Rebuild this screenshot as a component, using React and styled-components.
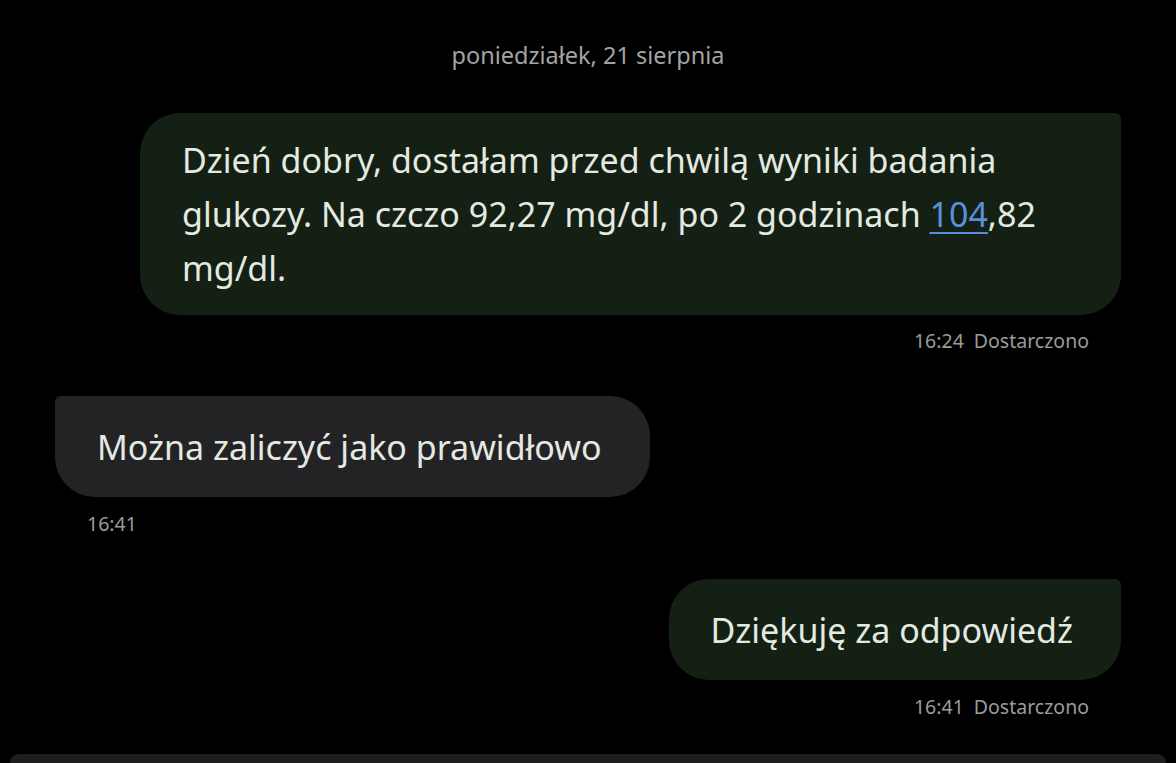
import React from 'react';
import styled, { createGlobalStyle } from 'styled-components';

const GlobalStyle = createGlobalStyle`
  html, body {
    margin: 0;
    padding: 0;
    background: #000;
    overflow: hidden;
  }
  body {
    font-family: "Noto Sans", "Liberation Sans", sans-serif;
  }
`;

const Screen = styled.div`
  width: 1176px;
  height: 763px;
  background: #000;
  overflow: hidden;
  display: flex;
  flex-direction: column;
`;

const MessageList = styled.div`
  display: flex;
  flex-direction: column;
  padding: 0 55px;
`;

const DateLabel = styled.div`
  margin-top: 40px;
  text-align: center;
  font-size: 23.5px;
  line-height: 30px;
  color: #a3a3a3;
`;

const Group = styled.div`
  display: flex;
  flex-direction: column;
  align-items: ${(p) => (p.$out ? 'flex-end' : 'flex-start')};
  margin-top: 43px;
`;

const Bubble = styled.div`
  box-sizing: border-box;
  max-width: 981px;
  padding: ${(p) => (p.$single ? '23.5px 48px 23.5px 42px' : '20px 42px')};
  font-size: 34px;
  line-height: 54px;
  color: #e4e9e2;
  background: ${(p) => (p.$out ? '#132013' : '#232325')};
  border-radius: ${(p) => (p.$out ? '40px 6px 40px 40px' : '6px 40px 40px 40px')};
`;

const Link = styled.a`
  color: #5a8fdb;
  text-decoration: underline;
  text-underline-offset: 5px;
  text-decoration-thickness: 2px;
`;

const Meta = styled.div`
  margin-top: ${(p) => p.$gap || 15}px;
  padding: 0 32px;
  font-size: 19.5px;
  line-height: 24px;
  color: #9b9b9b;
  display: flex;
  gap: 10px;
`;

const Composer = styled.div`
  margin: 35px 10px 0;
  height: 60px;
  background: #1e1e20;
  border-radius: 30px 30px 0 0;
`;

const App = () => {
  return (
    <>
      <GlobalStyle />
      <Screen>
        <MessageList>
          <DateLabel>poniedziałek, 21 sierpnia</DateLabel>

          <Group $out>
            <Bubble $out>
              Dzień dobry, dostałam przed chwilą wyniki badania glukozy. Na czczo 92,27 mg/dl, po 2 godzinach <Link>104</Link>,82 mg/dl.
            </Bubble>
            <Meta $gap={14}>
              <span>16:24</span>
              <span>Dostarczono</span>
            </Meta>
          </Group>

          <Group>
            <Bubble $single>Można zaliczyć jako prawidłowo</Bubble>
            <Meta>
              <span>16:41</span>
            </Meta>
          </Group>

          <Group $out>
            <Bubble $out $single>Dziękuję za odpowiedź</Bubble>
            <Meta>
              <span>16:41</span>
              <span>Dostarczono</span>
            </Meta>
          </Group>
        </MessageList>
        <Composer />
      </Screen>
    </>
  );
};

export default App;
